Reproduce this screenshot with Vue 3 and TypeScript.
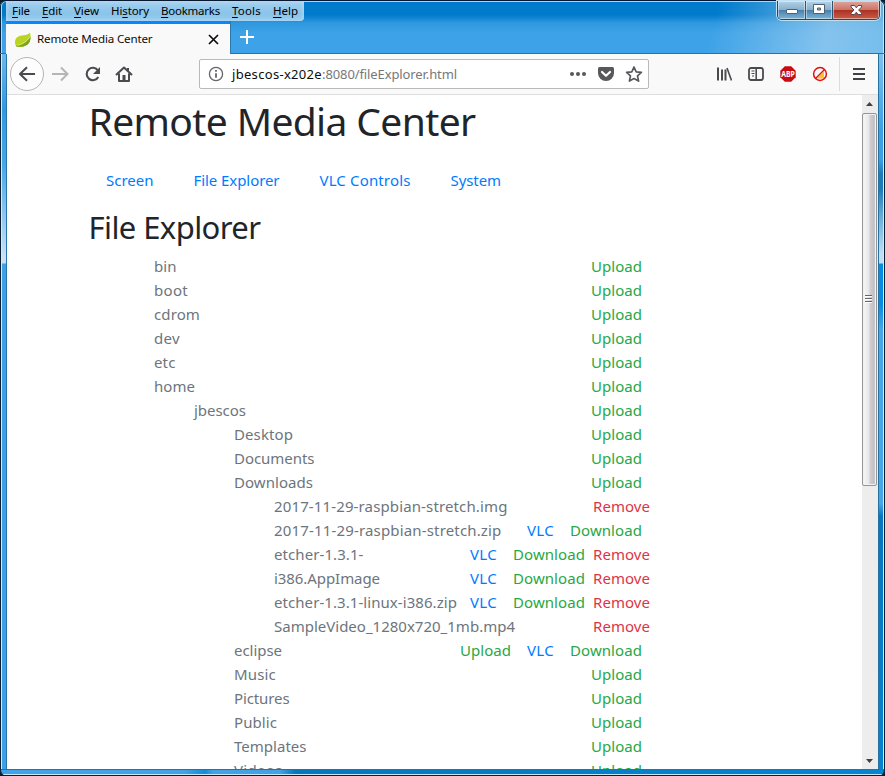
<script setup lang="ts">
import type { Directive } from 'vue'

// Tracks a label so that it fills the given advance width in pixels.
const vFit: Directive<HTMLElement, number> = {
  mounted(el, { value }) {
    const natural = el.getBoundingClientRect().width
    const count = (el.textContent ?? '').length
    el.style.letterSpacing = `${(value - natural) / count}px`
  },
}

const menus = [
  { key: 'F', before: '', after: 'ile', w: 18 },
  { key: 'E', before: '', after: 'dit', w: 20 },
  { key: 'V', before: '', after: 'iew', w: 25 },
  { key: 's', before: 'Hi', after: 'tory', w: 38 },
  { key: 'B', before: '', after: 'ookmarks', w: 59 },
  { key: 'T', before: '', after: 'ools', w: 29 },
  { key: 'H', before: '', after: 'elp', w: 25 },
]

const links = [
  { label: 'Screen', w: 47.5 },
  { label: 'File Explorer', w: 86 },
  { label: 'VLC Controls', w: 91 },
  { label: 'System', w: 50.5 },
]

type Action = 'Upload' | 'VLC' | 'Download' | 'Remove'
interface Entry { name: string; depth: number; w: number; actions: Action[] }

const actionWidth: Record<Action, number> = { Upload: 51, VLC: 27, Download: 72, Remove: 57 }

const entries: Entry[] = [
  { name: 'bin', depth: 0, w: 22.5, actions: ['Upload'] },
  { name: 'boot', depth: 0, w: 34, actions: ['Upload'] },
  { name: 'cdrom', depth: 0, w: 46, actions: ['Upload'] },
  { name: 'dev', depth: 0, w: 26, actions: ['Upload'] },
  { name: 'etc', depth: 0, w: 21.5, actions: ['Upload'] },
  { name: 'home', depth: 0, w: 41, actions: ['Upload'] },
  { name: 'jbescos', depth: 1, w: 52, actions: ['Upload'] },
  { name: 'Desktop', depth: 2, w: 59, actions: ['Upload'] },
  { name: 'Documents', depth: 2, w: 80.5, actions: ['Upload'] },
  { name: 'Downloads', depth: 2, w: 79, actions: ['Upload'] },
  { name: '2017-11-29-raspbian-stretch.img', depth: 3, w: 233.5, actions: ['Remove'] },
  { name: '2017-11-29-raspbian-stretch.zip', depth: 3, w: 227.5, actions: ['VLC', 'Download'] },
  { name: 'etcher-1.3.1-', depth: 3, w: 89.5, actions: ['VLC', 'Download', 'Remove'] },
  { name: 'i386.AppImage', depth: 3, w: 106, actions: ['VLC', 'Download', 'Remove'] },
  { name: 'etcher-1.3.1-linux-i386.zip', depth: 3, w: 183, actions: ['VLC', 'Download', 'Remove'] },
  { name: 'SampleVideo_1280x720_1mb.mp4', depth: 3, w: 241, actions: ['Remove'] },
  { name: 'eclipse', depth: 2, w: 48, actions: ['Upload', 'VLC', 'Download'] },
  { name: 'Music', depth: 2, w: 42, actions: ['Upload'] },
  { name: 'Pictures', depth: 2, w: 55.5, actions: ['Upload'] },
  { name: 'Public', depth: 2, w: 43, actions: ['Upload'] },
  { name: 'Templates', depth: 2, w: 72.5, actions: ['Upload'] },
  { name: 'Videos', depth: 2, w: 48.5, actions: ['Upload'] },
]
</script>

<template>
  <div class="window">
    <header class="titlebar">
      <div class="title-row">
        <nav class="menubar">
          <span v-for="m in menus" :key="m.key" v-fit="m.w" class="menu">{{ m.before }}<u>{{ m.key }}</u>{{ m.after }}</span>
        </nav>
        <div class="controls">
          <button class="ctl min" aria-label="Minimize">
            <svg width="27" height="18" viewBox="0 0 27 18"><rect x="8.5" y="8.500" width="11" height="4" rx=".5" fill="#fff" stroke="#53616e" /></svg>
          </button>
          <button class="ctl max" aria-label="Maximize">
            <svg width="26" height="18" viewBox="0 0 26 18"><path fill-rule="evenodd" d="M7.500 3.500h11v9h-11zM11.500 7v2h3v-2z" fill="#fff" stroke="#53616e" /></svg>
          </button>
          <button class="ctl close" aria-label="Close">
            <svg width="46" height="18" viewBox="0 0 46 18"><path d="M18 4.500h3.500l1.800 2.300 1.800-2.300h3.500v1.500l-3 3 3 3v1.500h-3.500l-1.800-2.300-1.800 2.300H18V12l3-3-3-3z" fill="#fff" stroke="#5c474c" /></svg>
          </button>
        </div>
      </div>
      <div class="tab-row">
        <div class="tab">
          <svg class="leaf" width="18" height="16" viewBox="0 0 18 16">
            <path d="M1 10C1 4 7 3.500 11 3c2.500-.3 4-1.200 5-2.500 1.300 5 .5 10-3 12.500-3 2-8 2.200-10.500 1.500C1.500 13.500 1 12 1 10z" fill="#b9d421" />
            <path d="M2 13.500C8 13 13 10 16.500 4.500c.2 3.500-.8 6.800-3.500 8.500-3 2-8 2.200-10.500 1.500z" fill="#7fa51c" />
            <path d="M3 13.200C8 12.800 13 9.500 16 4.500" fill="none" stroke="#e5ee91" stroke-width=".8" />
          </svg>
          <span v-fit="115.5" class="tab-title">Remote Media Center</span>
          <svg class="tab-x" width="11" height="11" viewBox="0 0 11 11"><path d="M1 1l9 9M10 1l-9 9" stroke="#0c0c0d" stroke-width="1.700" /></svg>
        </div>
        <svg class="plus" width="14" height="14" viewBox="0 0 14 14"><path d="M7 0v14M0 7h14" stroke="#fff" stroke-width="2" /></svg>
      </div>
    </header>

    <div class="edge left"></div>
    <div class="inner">
      <div class="toolbar">
        <svg class="history" width="165" height="41" viewBox="0 0 165 41" fill="none" stroke="#4a4a4f" stroke-width="2">
          <circle cx="20" cy="20" r="16.500" fill="#fdfdfd" stroke="#b5b5b6" stroke-width="1" />
          <path d="M28 20H13.500M20 13.200L13 20l7 6.800" stroke-linejoin="round" />
          <path d="M45 20h15M54 13.500l6.500 6.500L54 26.500" stroke="#b5b5b6" />
          <path d="M91 16.500A6.200 6.200 0 1 0 91.300 23" stroke-width="2.100" />
          <path d="M93 13v7h-7z" fill="#4a4a4f" stroke="none" />
          <path d="M109 21l8-7.500 8 7.500M112 19.500v7.500h10v-7.500" stroke-linejoin="round" />
          <path d="M121 14v3" /><path d="M115.500 21h3v6h-3z" fill="#4a4a4f" stroke="none" />
        </svg>
        <div class="urlbar">
          <svg class="info" width="16" height="16" viewBox="0 0 16 16" fill="none" stroke="#65656a" stroke-width="1.300"><circle cx="8" cy="8" r="6.600" /><path d="M8 7.200v4.500M8 4v1.800" stroke-width="1.800" /></svg>
          <span class="url"><span v-fit="90" class="host">jbescos-x202e</span><span v-fit="135">:8080/fileExplorer.html</span></span>
          <svg class="page-actions" width="76" height="28" viewBox="0 0 76 28">
            <g fill="#58585c"><circle cx="4" cy="14" r="2" /><circle cx="10" cy="14" r="2" /><circle cx="16" cy="14" r="2" />
              <path d="M31.500 7h13q1.500 0 1.500 1.500V13a8 8 0 0 1-16 0V8.500Q30 7 31.500 7z" /></g>
            <path d="M34 12l4 3.800 4-3.800" fill="none" stroke="#fff" stroke-width="2.200" stroke-linecap="round" stroke-linejoin="round" />
            <path d="M66 7l2.200 4.800 5.200.6-3.900 3.500 1.100 5.200-4.600-2.600-4.600 2.600 1.100-5.200-3.900-3.500 5.200-.6z" fill="none" stroke="#58585c" stroke-width="1.700" stroke-linejoin="round" />
          </svg>
        </div>
        <div class="tools">
          <svg class="lib" width="16" height="16" viewBox="0 0 16 16" stroke="#4a4a4f" stroke-width="2"><path d="M2 1.500v13M6 3.500v11M9.500 3.500v11" /><path d="M11 2l4.500 12.500" stroke-width="1.600" /></svg>
          <svg class="side" width="16" height="16" viewBox="0 0 16 16" fill="none" stroke="#4a4a4f"><rect x="1" y="2" width="14" height="12" rx="2" stroke-width="1.800" /><path d="M8.200 2v12" stroke-width="1.600" /><path d="M3.500 5h3M3.500 7.500h3M4 10h2" stroke-width="1" /></svg>
          <svg class="abp" width="16" height="16" viewBox="0 0 16 16"><path d="M4.800.3h6.400l4.500 4.500v6.400l-4.500 4.500H4.800L.3 11.200V4.800z" fill="#c70d12" /><text x="8" y="11" text-anchor="middle" textLength="13.500" lengthAdjust="spacingAndGlyphs">ABP</text></svg>
          <svg class="block" width="16" height="16" viewBox="0 0 16 16"><path d="M4.500 12.500L12 5v7.500z" fill="#ffc229" /><circle cx="8" cy="8" r="6.400" fill="none" stroke="#db1212" stroke-width="1.500" /><path d="M3.500 12.500l9-9" stroke="#db1212" stroke-width="1.300" /></svg>
          <i class="divider"></i>
          <svg class="burger" width="12" height="12" viewBox="0 0 12 12"><path d="M0 1h12M0 6h12M0 11h12" stroke="#3f3f44" stroke-width="2" /></svg>
        </div>
      </div>

      <div class="viewport">
        <main class="page">
          <h1><span v-fit="387">Remote Media Center</span></h1>
          <nav class="links"><a v-for="l in links" :key="l.label" v-fit="l.w">{{ l.label }}</a></nav>
          <h2><span v-fit="172">File Explorer</span></h2>
          <ul class="tree">
            <li v-for="e in entries" :key="e.name" class="row" :class="`depth-${e.depth}`">
              <span v-fit="e.w" class="name">{{ e.name }}</span>
              <span v-for="a in e.actions" :key="a" class="action" :class="a.toLowerCase()"><span v-fit="actionWidth[a]">{{ a }}</span></span>
            </li>
          </ul>
        </main>
        <div class="scrollbar">
          <div class="arrow"><svg width="7" height="4" viewBox="0 0 7 4"><path d="M0 4l3.500-4L7 4z" fill="#404040" /></svg></div>
          <div class="thumb"><svg width="9" height="9" viewBox="0 0 9 9"><path d="M1 1.500h7M1 4.500h7M1 7.500h7" stroke="#66666a" /><path d="M1 2.500h7M1 5.500h7M1 8.500h7" stroke="#fff" /></svg></div>
          <div class="track"></div>
          <div class="arrow"><svg width="7" height="4" viewBox="0 0 7 4"><path d="M0 0l3.500 4L7 0z" fill="#404040" /></svg></div>
        </div>
      </div>
    </div>
    <div class="edge right"></div>
    <footer class="bottom"></footer>
  </div>
</template>

<style>
body { background: #0b1d2b; overflow: hidden; }
</style>

<style scoped>
* { box-sizing: border-box; }
.window { width: 885px; height: 776px; display: grid; grid-template: 54px 715px 7px / 7px 871px 7px; font-family: "Noto Sans", "Open Sans", sans-serif; border-radius: 6px; overflow: hidden; }
.titlebar {
  grid-column: 1 / 4; display: flex; flex-direction: column; border-top: 1px solid #061831; border-radius: 6px 6px 0 0;
  box-shadow: inset 1px 0 #0b2540, inset -1px 0 #07233c, inset 0 1px #a8d6f3, inset 2px 0 #b9dcf2, inset -2px 0 #c8e7f8;
  background:
    linear-gradient(105deg, transparent 80%, rgba(177, 215, 241, .62) 93%, rgba(155, 208, 242, .6)),
    linear-gradient(#007bcc 0 14px, #2f98df 22px, #3da2e7 32px, #3da2e7);
}
.title-row { height: 20px; display: flex; justify-content: space-between; align-items: flex-start; }
.menubar { display: flex; gap: 12px; width: 298px; height: 20px; margin-left: 6px; padding-left: 6px; background: linear-gradient(#a3cfee, #8bc4ea 60%, #93caee); border-radius: 0 0 4px 0; box-shadow: inset 0 0 4px #c3e1f5; }
.menu { font-size: 11.500px; line-height: 20px; color: #000; white-space: nowrap; }
.menu u { text-underline-offset: 1.500px; text-decoration-thickness: 1px; }
.controls { display: flex; height: 19px; margin-right: 5px; border: 1px solid #244967; border-top: 0; border-radius: 0 0 5px 5px; overflow: hidden; box-shadow: 0 0 0 1px #bfe0f3; }
.ctl { border: 0; padding: 0; height: 18px; display: block; box-shadow: inset 0 0 0 1px rgba(255, 255, 255, .45); }
.ctl svg { display: block; }
.min, .max { border-right: 1px solid #315471; background: linear-gradient(#b5d1e6, #87b0ce 48%, #477fac 50%, #7db5d6); }
.close { background: linear-gradient(#dea79c, #cc7469 48%, #ac3022 50%, #c65d47); }
.tab-row { display: flex; height: 33px; border-bottom: 1px solid #2473a9; }
.tab { width: 224px; height: 33px; margin-left: 6px; border-top: 3px solid #0a84ff; background: #f9f9fa; display: flex; align-items: center; padding-left: 8px; box-shadow: 1px 0 #2d78aa; }
.leaf { flex: none; margin-right: 5px; margin-top: 1px; }
.tab-title { font-size: 11.600px; line-height: 20px; white-space: nowrap; color: #0c0c0d; }
.tab-x { margin-left: 55px; flex: none; margin-top: 1px; }
.plus { margin: 9px 0 0 10px; }
.edge { height: 715px; }
.left { background: linear-gradient(90deg, #0b2035 0 1px, #d5edfa 1px 2px, transparent 2px 6px, #2773ab 6px), linear-gradient(#6fb7ea, #3399df 55px, #48a6e7 110px, #cde3f5 205px, #c6dff3 209px, #3ea0e5 210px); }
.right { background: linear-gradient(90deg, #27719f 0 1px, transparent 1px 5px, #d3edfb 5px 6px, #091e30 6px), linear-gradient(#7fc0ee, #3da1e7 75px, #3da1e7 105px, #1e7bb9 120px, #1e7bb9 135px, #61a9d4 160px, #c1dff4 200px, #c1dff4 209px, #078be3 210px, #078be3 250px, #46a6e8 275px, #46a6e8 450px, #0876c0 462px, #0782cf); }
.bottom { grid-column: 1 / 4; border-radius: 0 0 6px 6px; background: linear-gradient(#2773a6 0 1px, transparent 1px 5px, #cae7f8 5px 6px, #071f31 6px), linear-gradient(90deg, #42a2e5 0 185px, #148bda 205px, #42a2e5 213px 280px, #0777bd 295px, #0784d2); box-shadow: inset 1px 0 #0b2035, inset -1px 0 #0b2035; }
.inner { min-width: 0; height: 715px; display: flex; flex-direction: column; background: #fff; }
.toolbar { height: 41px; flex: none; display: flex; background: #f9f9fa; border-bottom: 1px solid #dedede; }
.history { flex: none; margin-right: 27px; }
.urlbar { width: 450px; height: 30px; margin-top: 5px; border: 1px solid #b9b9ba; border-radius: 2px; background: #fff; display: flex; align-items: center; padding-left: 8px; }
.url { font-size: 13px; line-height: 26px; white-space: nowrap; margin-left: 8px; color: #77777a; }
.host { color: #0c0c0d; }
.page-actions { margin-left: auto; margin-right: 4px; }
.tools { display: flex; align-items: center; padding-left: 67px; height: 40px; }
.tools svg { flex: none; }
.side, .abp, .block { margin-left: 16px; }
.abp text { font: bold 8px "Noto Sans", sans-serif; fill: #fff; }
.divider { width: 1px; height: 34px; background: #dcdcdd; margin: 0 13px 0 11px; }
.viewport { display: flex; flex: 1; min-height: 0; overflow: hidden; }
.page { width: 855px; padding-left: 83px; overflow: hidden; }
h1, h2 { margin: 0 0 0 -1.500px; font-weight: 400; color: #212529; white-space: nowrap; }
h1 { font-size: 39px; line-height: 48px; margin-top: 2px; }
h2 { font-size: 31px; line-height: 38px; margin-top: 8px; }
.links { display: flex; gap: 40px; padding: 8px 16px; height: 40px; margin-top: 15px; font-size: 15px; line-height: 24px; color: #007bff; }
.tree { list-style: none; margin: 8px 0 0; padding: 0; font-size: 15px; line-height: 24px; color: #6c757d; }
.row { display: flex; width: 560px; height: 24px; white-space: nowrap; }
.name { margin-right: auto; }
.depth-0 { padding-left: 64px; } .depth-1 { padding-left: 104px; } .depth-2 { padding-left: 144px; } .depth-3 { padding-left: 184px; }
.action { padding: 0 8px; }
.upload, .download { color: #28a745; }
.vlc { color: #007bff; }
.remove { color: #dc3545; padding: 0; }
.scrollbar { width: 16px; display: flex; flex-direction: column; background: #ededee; padding-right: 1px; }
.arrow { height: 17px; display: flex; align-items: center; justify-content: center; flex: none; }
.thumb { height: 373px; margin-top: 1px; flex: none; display: flex; align-items: center; justify-content: center; border: 1px solid #959598; border-radius: 2px; background: linear-gradient(90deg, #f8f8f8, #e7e7e9 45%, #cfcfd3 55%, #c0c0c5 85%, #dededf); box-shadow: inset 0 0 0 1px #f2f2f2; }
.thumb svg { margin: 0 2px 2px 0; }
.track { flex: 1; }
</style>
